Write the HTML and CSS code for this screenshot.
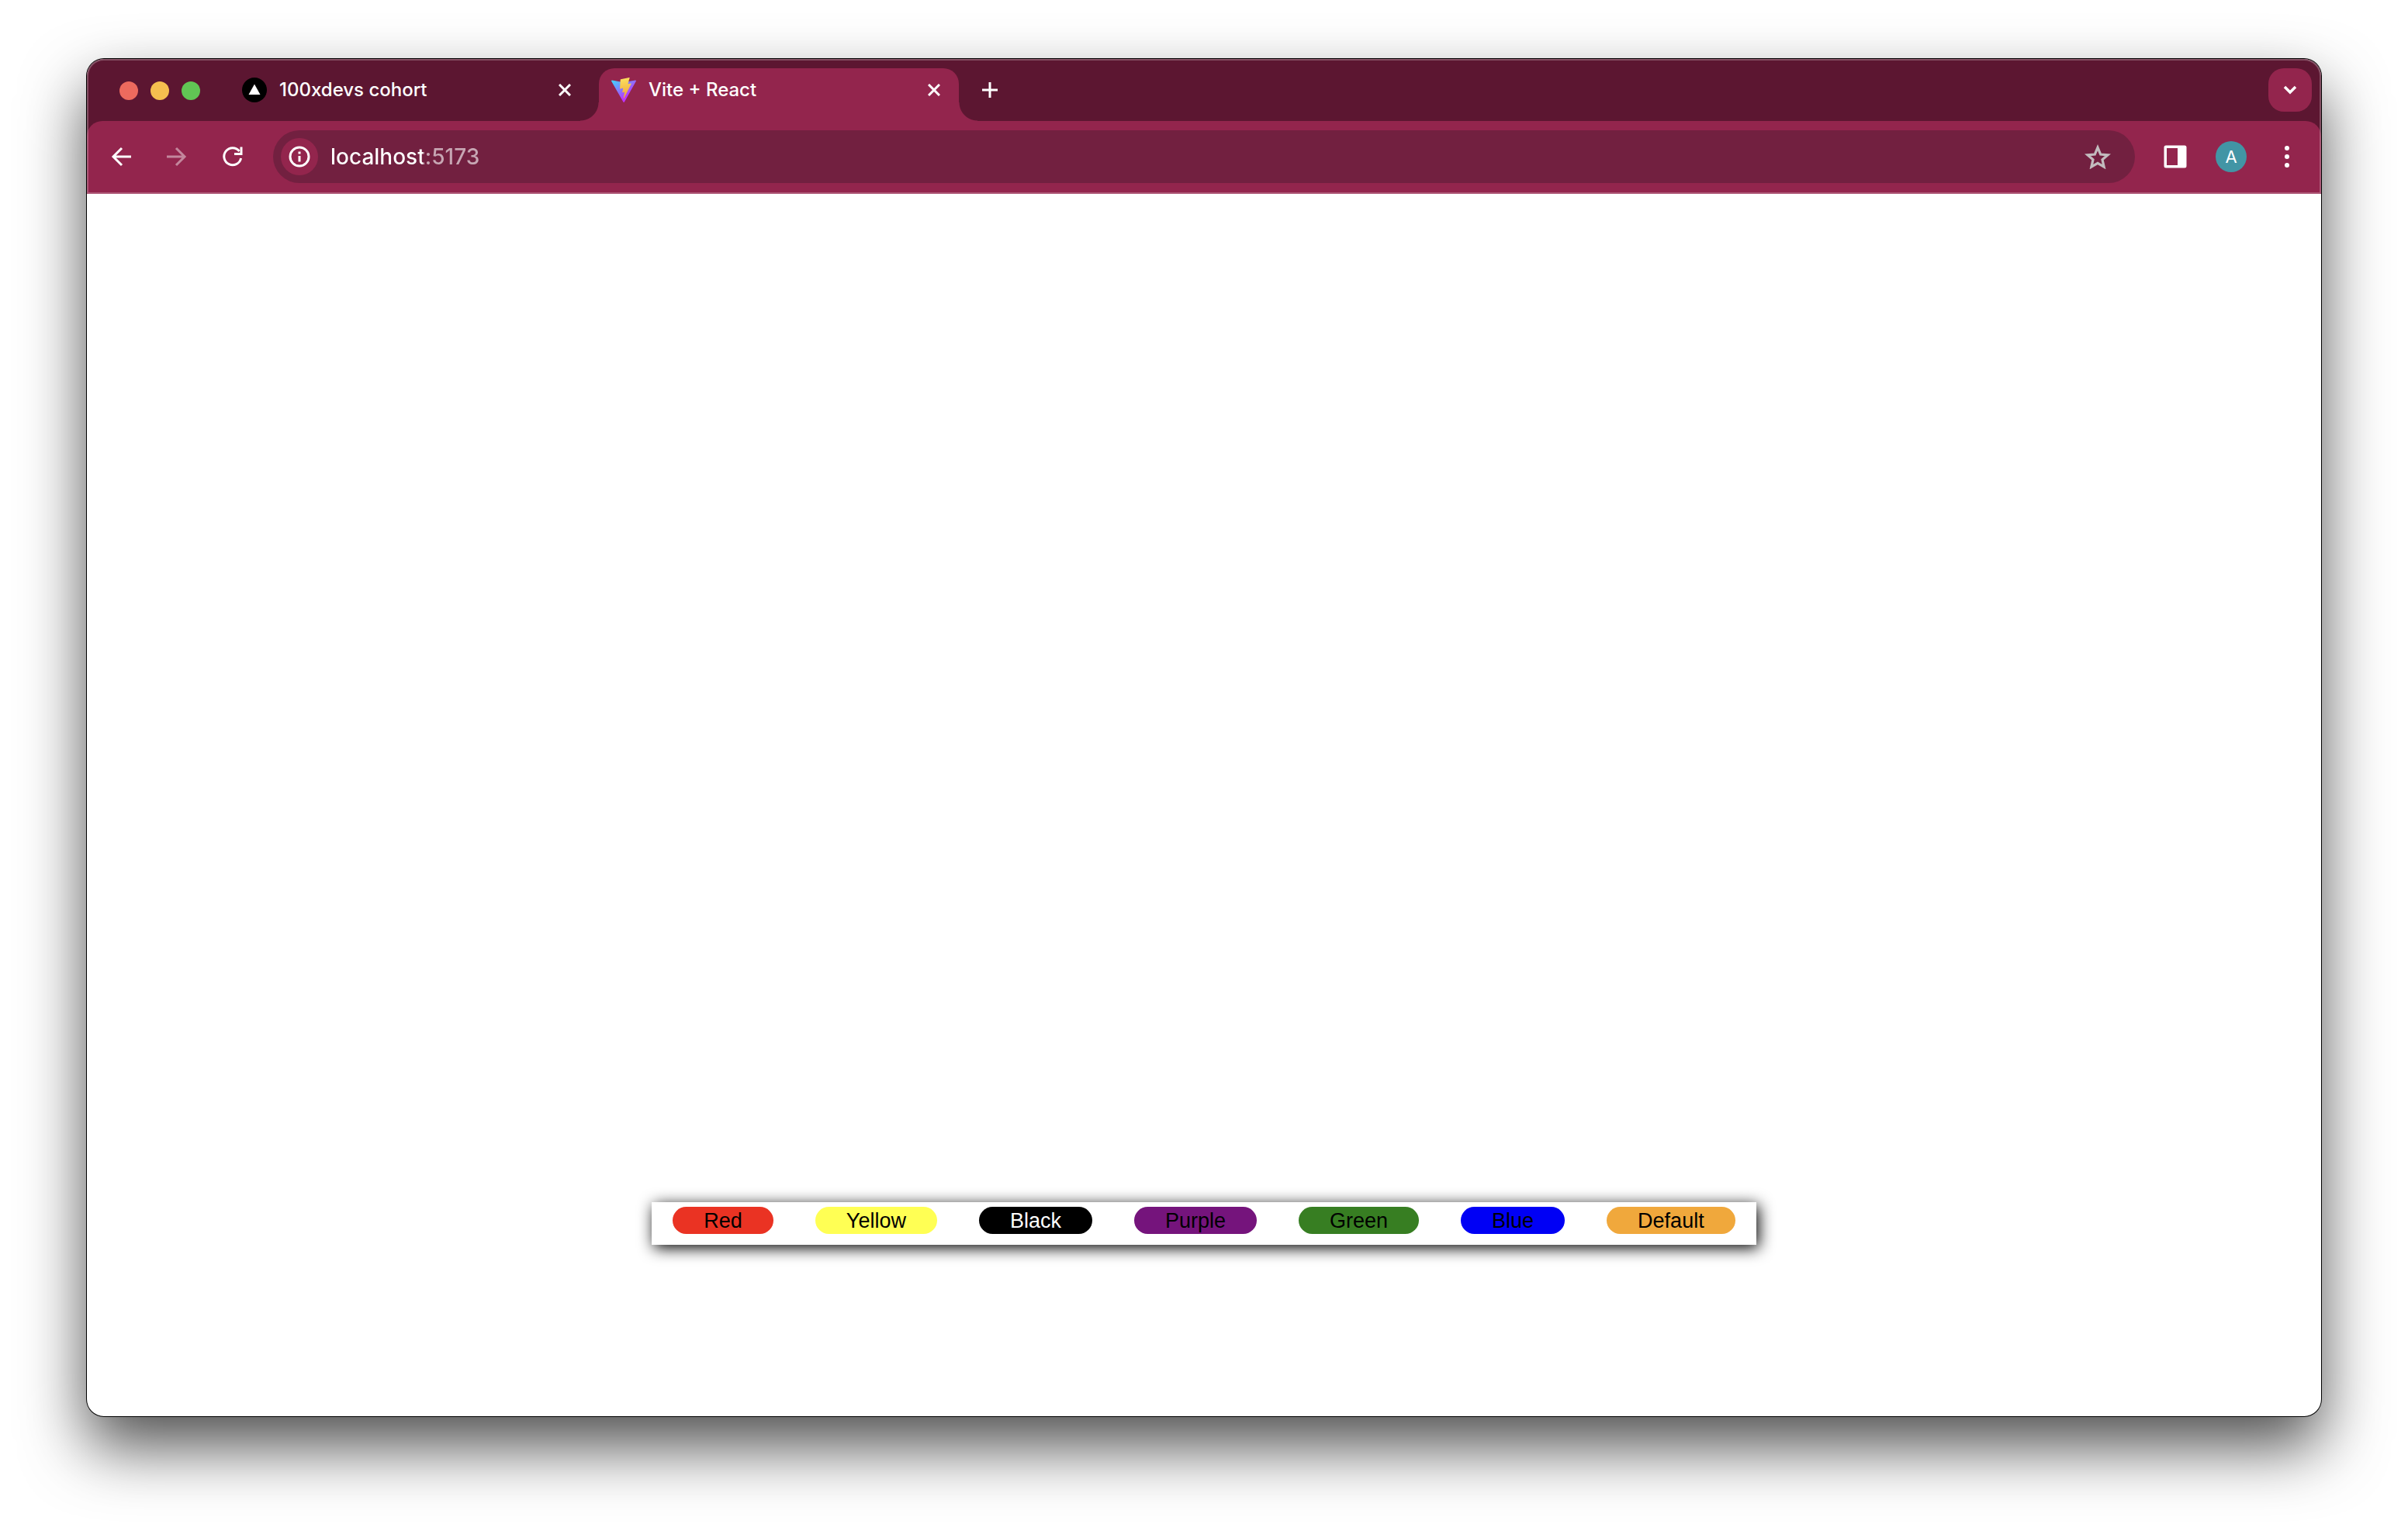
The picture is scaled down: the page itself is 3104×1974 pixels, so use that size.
FILE: index.html
```
<!DOCTYPE html>
<html lang="en">
<head>
<meta charset="utf-8">
<title>Vite + React</title>
<link rel="stylesheet" href="styles.css">
</head>
<body>
<div class="window">
  <header class="chrome">
    <div class="tabstrip">
      <div class="lights">
        <button class="light light-close" aria-label="Close window"></button>
        <button class="light light-min" aria-label="Minimize window"></button>
        <button class="light light-max" aria-label="Zoom window"></button>
      </div>
      <div class="tabs">
        <div class="tab">
          <svg class="favicon" viewBox="0 0 32 32" aria-hidden="true"><circle cx="16" cy="16" r="16" fill="#000"/><path d="M16 8.500 23.500 22h-15z" fill="#fff"/></svg>
          <a class="tab-title" href="#cohort">100xdevs cohort</a>
          <button class="icon-btn" aria-label="Close tab"><svg width="16" height="16" viewBox="0 0 16 16"><path d="M1 1l14 14M15 1 1 15" stroke="#fff" stroke-width="3" fill="none"/></svg></button>
        </div>
        <div class="tab tab-active">
          <svg class="favicon" viewBox="0 0 256 257" aria-hidden="true">
            <defs>
              <linearGradient id="viteBody" x1="-.828%" x2="57.636%" y1="7.652%" y2="78.411%"><stop offset="0%" stop-color="#41D1FF"/><stop offset="100%" stop-color="#BD34FE"/></linearGradient>
              <linearGradient id="viteBolt" x1="43.376%" x2="50.316%" y1="2.242%" y2="89.030%"><stop offset="0%" stop-color="#FBE05E"/><stop offset="100%" stop-color="#F0A83C"/></linearGradient>
            </defs>
            <path fill="url(#viteBody)" d="M255.153 37.938 134.897 252.976c-2.483 4.440-8.862 4.466-11.382.048L.875 37.958c-2.746-4.814 1.371-10.646 6.827-9.670l120.385 21.517a6.537 6.537 0 0 0 2.322-.004l117.867-21.483c5.438-.991 9.574 4.796 6.877 9.620Z"/>
            <path fill="url(#viteBolt)" d="M185.432.063 96.440 17.501a3.268 3.268 0 0 0-2.634 3.014l-5.474 92.456a3.268 3.268 0 0 0 3.997 3.378l24.777-5.718c2.318-.535 4.413 1.507 3.936 3.838l-7.361 36.047c-.495 2.426 1.782 4.500 4.151 3.780l15.304-4.649c2.372-.720 4.652 1.360 4.150 3.788l-11.698 56.621c-.732 3.542 3.979 5.473 5.943 2.437l1.313-2.028 72.516-144.720c1.215-2.423-.880-5.186-3.540-4.672l-25.505 4.922c-2.396.462-4.435-1.770-3.759-4.114l16.646-57.705c.677-2.350-1.370-4.583-3.769-4.113Z"/>
          </svg>
          <a class="tab-title" href="#vite" aria-current="page">Vite + React</a>
          <button class="icon-btn" aria-label="Close tab"><svg width="16" height="16" viewBox="0 0 16 16"><path d="M1 1l14 14M15 1 1 15" stroke="#fff" stroke-width="3" fill="none"/></svg></button>
        </div>
      </div>
      <button class="icon-btn new-tab" aria-label="New tab"><svg width="20" height="20" viewBox="0 0 20 20"><path d="M10 0v20M0 10h20" stroke="#fff" stroke-width="3" fill="none"/></svg></button>
      <button class="tab-search" aria-label="Search tabs"><svg width="18" height="12" viewBox="0 0 18 12"><path d="M2 2l7 7 7-7" stroke="#fff" stroke-width="3.500" fill="none"/></svg></button>
    </div>
    <nav class="toolbar">
      <button class="tool" aria-label="Back"><svg width="26" height="26" viewBox="0 0 26 26"><path d="M26 13H3M14 2 3 13l11 11" stroke="#fff" stroke-width="3" fill="none"/></svg></button>
      <button class="tool tool-dim" aria-label="Forward"><svg width="26" height="26" viewBox="0 0 26 26"><path d="M0 13h23M12 2l11 11-11 11" stroke="#fff" stroke-width="3" fill="none"/></svg></button>
      <button class="tool" aria-label="Reload"><svg width="28" height="28" viewBox="0 0 28 28"><path d="M24.600 16A11 11 0 1 1 22.500 7" stroke="#fff" stroke-width="3" fill="none"/><path d="M26.500 1.500v10.500H16V9h7.500V1.500z" fill="#fff"/></svg></button>
      <div class="address">
        <button class="site-info" aria-label="Site information"><svg width="28" height="28" viewBox="0 0 28 28"><circle cx="14" cy="14" r="12" stroke="#fff" stroke-width="3" fill="none"/><path d="M12.500 13h3v7.500h-3zM12.500 7.500h3v3h-3z" fill="#fff"/></svg></button>
        <input class="url" type="text" value="localhost:5173" aria-label="Address">
        <button class="tool" aria-label="Bookmark"><svg width="34" height="32" viewBox="0 0 34 32"><path d="M17 4.200l3.700 8.800 9.400.8-7.100 6.100 2.100 9.200-8.100-4.800-8.100 4.800 2.100-9.200-7.100-6.100 9.400-.8z" stroke="#c2bcbe" stroke-width="3.200" fill="none"/></svg></button>
      </div>
      <button class="tool" aria-label="Side panel"><svg width="30" height="30" viewBox="0 0 30 30"><path fill="#fff" fill-rule="evenodd" d="M3 .5h24A2.500 2.500 0 0 1 29.500 3v24a2.500 2.500 0 0 1-2.500 2.500H3A2.500 2.500 0 0 1 .5 27V3A2.500 2.500 0 0 1 3 .5zM4 4v22h14V4z"/></svg></button>
      <button class="tool" aria-label="Profile"><span class="avatar">A</span></button>
      <button class="tool" aria-label="Menu"><svg width="6" height="28" viewBox="0 0 6 28"><g fill="#fff"><circle cx="3" cy="3" r="3"/><circle cx="3" cy="14" r="3"/><circle cx="3" cy="25" r="3"/></g></svg></button>
    </nav>
  </header>
  <main class="page">
    <div class="palette">
      <button class="swatch red">Red</button>
      <button class="swatch yellow">Yellow</button>
      <button class="swatch black">Black</button>
      <button class="swatch purple">Purple</button>
      <button class="swatch green">Green</button>
      <button class="swatch blue">Blue</button>
      <button class="swatch default">Default</button>
    </div>
  </main>
</div>
</body>
</html>
```
FILE: styles.css
```
* {
  box-sizing: border-box;
}

body {
  margin: 0;
  min-height: 100vh;
  padding: 76px 112px 148px;
  display: flex;
  background: #fff;
  font-family: Inter, "Liberation Sans", sans-serif;
  overflow-x: hidden;
}

button {
  border: 0;
  padding: 0;
  background: none;
  font: inherit;
  color: inherit;
}

svg {
  display: block;
  flex: none;
}

.window {
  flex: 1;
  min-width: 0;
  display: flex;
  flex-direction: column;
  border-radius: 22px;
  background: #fff;
  box-shadow: 0 0 0 1px #000, 0 39px 82px rgba(0, 0, 0, 0.69);
}

/* Browser chrome */
.chrome {
  position: relative;
  border-radius: 22px 22px 0 0;
  background: #5c1631;
  color: #fff;
  overflow: hidden;
}

.chrome::after {
  content: "";
  position: absolute;
  inset: 0;
  border: 2px solid rgba(255, 255, 255, 0.25);
  border-radius: 22px 22px 0 0;
  pointer-events: none;
}

.tabstrip {
  display: flex;
  align-items: center;
  height: 80px;
  padding: 12px 12px 0 42px;
}

.lights {
  display: flex;
  gap: 16px;
  padding-bottom: 10px;
  margin-right: 38px;
}

.light {
  width: 24px;
  height: 24px;
  border-radius: 50%;
}

.light-close { background: #ed6a5e; }
.light-min { background: #f5bf4f; }
.light-max { background: #61c554; }

.tabs {
  display: flex;
  gap: 12px;
}

.tab {
  position: relative;
  display: flex;
  align-items: center;
  gap: 16px;
  width: 464px;
  height: 68px;
  padding: 0 24px 12px 16px;
}

.tab-active {
  background: #93254d;
  border-radius: 20px 20px 0 0;
}

.tab-active::before,
.tab-active::after {
  content: "";
  position: absolute;
  bottom: 0;
  width: 24px;
  height: 24px;
}

.tab-active::before {
  right: 100%;
  background: radial-gradient(circle at 0 0, transparent 23px, #93254d 24px);
}

.tab-active::after {
  left: 100%;
  background: radial-gradient(circle at 100% 0, transparent 23px, #93254d 24px);
}

.favicon {
  width: 32px;
  height: 32px;
}

.tab-title {
  flex: 1;
  color: #fff;
  text-decoration: none;
  font-size: 24px;
  line-height: 32px;
  font-weight: 500;
  white-space: nowrap;
}

.new-tab {
  margin: 0 auto 12px 30px;
}

.tab-search {
  display: grid;
  place-items: center;
  width: 56px;
  height: 56px;
  margin-bottom: 12px;
  border-radius: 20px;
  background: #93254d;
}

.toolbar {
  display: flex;
  align-items: center;
  gap: 24px;
  height: 94px;
  padding: 0 20px 2px;
  border-radius: 20px 20px 0 0;
  background: #93254d;
}

.tool {
  display: grid;
  place-items: center;
  flex: none;
  width: 48px;
  height: 48px;
}

.tool-dim {
  opacity: 0.45;
}

.address {
  flex: 1;
  display: flex;
  align-items: center;
  height: 68px;
  margin: 0 4px;
  padding: 0 24px 0 10px;
  border-radius: 34px;
  background: #722040;
}

.site-info {
  display: grid;
  place-items: center;
  width: 48px;
  height: 48px;
  border-radius: 50%;
  background: #93254d;
}

/* Host is drawn bright, the port dimmed */
.url {
  flex: 1;
  min-width: 0;
  height: 48px;
  margin: 0 16px;
  padding: 0;
  border: 0;
  outline: 0;
  background: linear-gradient(90deg, #fff 119px, #c7a6b3 119px);
  -webkit-background-clip: text;
  background-clip: text;
  color: transparent;
  font-family: inherit;
  font-size: 28px;
  font-weight: 500;
}

.avatar {
  width: 40px;
  height: 40px;
  border-radius: 50%;
  background: #4295a5;
  font-size: 22px;
  line-height: 40px;
  text-align: center;
}

/* Web page */
.page {
  flex: 1;
  display: flex;
  justify-content: center;
  align-items: flex-end;
  padding-bottom: 221px;
}

.palette {
  display: flex;
  gap: 54px;
  padding: 6px 27px 14px;
  background: #fff;
  box-shadow: 3px 4px 20px #000;
}

.swatch {
  height: 35px;
  padding: 0 40px;
  border-radius: 18px;
  font-family: "Liberation Sans", Arial, sans-serif;
  font-size: 27px;
  line-height: 34px;
  color: #000;
}

.red { background: #ea3323; }
.yellow { background: #ffff54; }
.black { background: #000; color: #fff; }
.purple { background: #75147c; }
.green { background: #377e22; }
.blue { background: #0000f5; }
.default { background: #f0a83c; }
```
